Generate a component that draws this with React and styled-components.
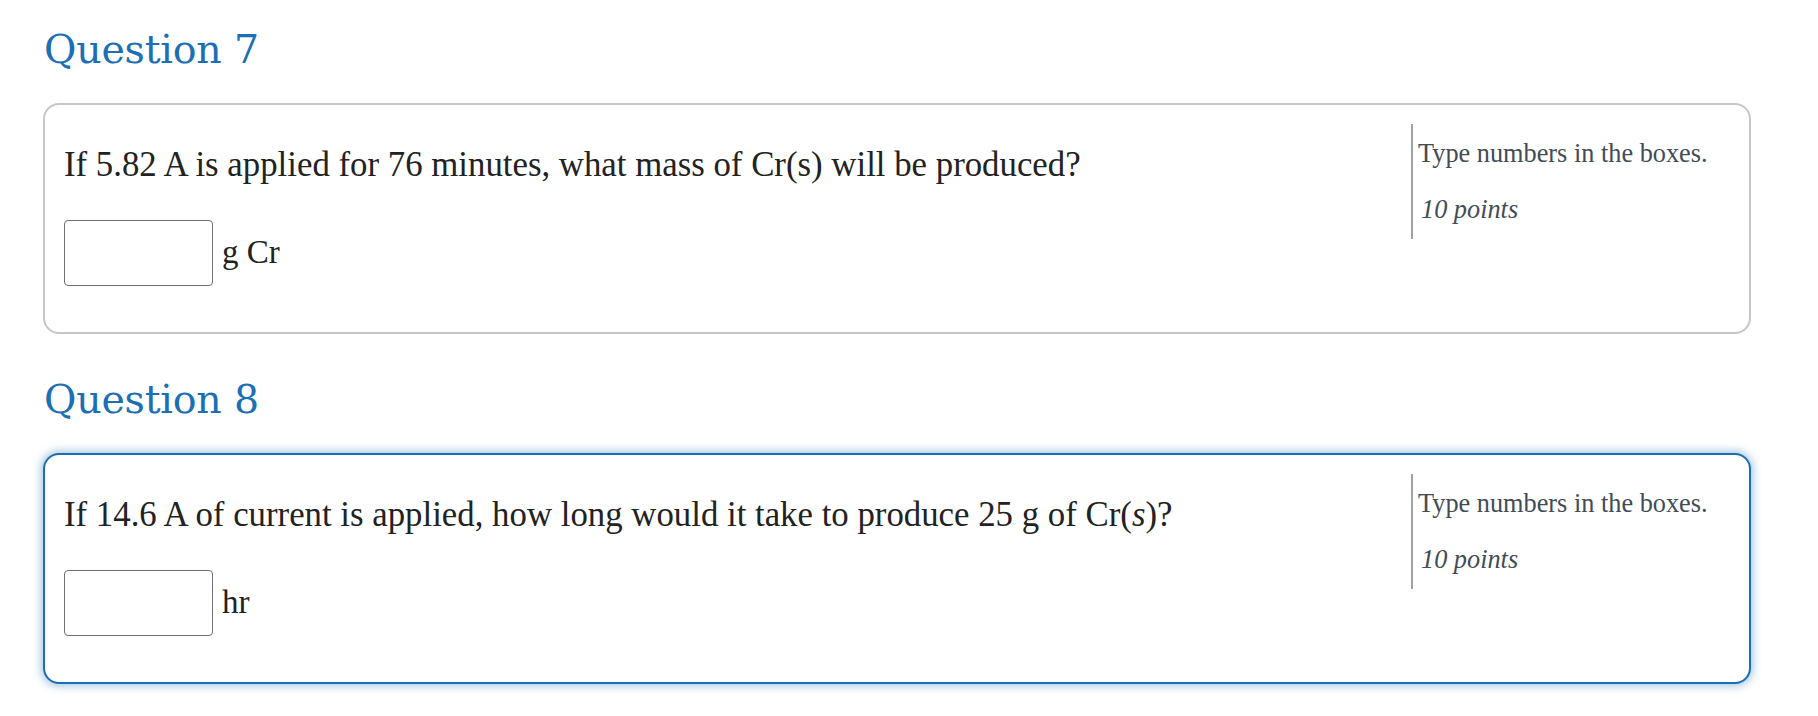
import React from "react";
import styled, { createGlobalStyle } from "styled-components";

const GlobalStyle = createGlobalStyle`
  html, body { margin: 0; padding: 0; background: #ffffff; }
  body { font-family: "Liberation Serif", "Times New Roman", serif; }
  * { box-sizing: border-box; }
`;

const Page = styled.main`
  padding: 25px 67px 20px 43px;
`;

const Section = styled.section`
  margin-bottom: 41px;
`;

const Heading = styled.h2`
  margin: 0 0 30px 1px;
  font-family: "DejaVu Serif", "Liberation Serif", serif;
  font-weight: 400;
  font-size: 39.5px;
  line-height: 48px;
  letter-spacing: -0.2px;
  color: #1c6fb5;
`;

const Card = styled.div`
  display: flex;
  align-items: flex-start;
  border-radius: 16px;
  border: 2px solid ${(p) => (p.$active ? "#1b6eb4" : "#c6c6c6")};
  box-shadow: ${(p) =>
    p.$active ? "0 0 8px 2px rgba(27, 110, 180, 0.4)" : "none"};
  padding: 19px 36px 20px 19px;
  background: #fff;
`;

const Main = styled.div`
  flex: 1;
  padding-top: 17px;
  padding-bottom: 26px;
`;

const Prompt = styled.p`
  margin: 0 0 31px 0;
  font-size: 34.8px;
  line-height: 48px;
  color: #222;
`;

const AnswerRow = styled.div`
  display: flex;
  align-items: center;
  gap: 9px;
`;

const NumberBox = styled.input`
  width: 149px;
  height: 66px;
  border: 1px solid #6f6f6f;
  border-radius: 4px;
  background: #fff;
  font: inherit;
  font-size: 30px;
  padding: 0 10px;
  outline: none;
`;

const Unit = styled.span`
  font-size: 33px;
  line-height: 48px;
  color: #222;
  position: relative;
  top: -1px;
`;

const Aside = styled.aside`
  width: 302px;
  border-left: 2px solid #9ea3a8;
  padding: 10px 0 10px 5px;
`;

const Instruction = styled.p`
  margin: 0;
  font-size: 26.3px;
  line-height: 39px;
  color: #424c56;
`;

const Points = styled.p`
  margin: 17px 0 0 3px;
  font-size: 26.3px;
  line-height: 39px;
  font-style: italic;
  color: #424c56;
`;

const questions = [
  {
    id: 7,
    text: "If 5.82 A is applied for 76 minutes, what mass of Cr(s) will be produced?",
    unit: "g Cr",
    active: false,
  },
  {
    id: 8,
    text: (
      <>
        If 14.6 A of current is applied, how long would it take to produce 25 g
        of Cr(<i>s</i>)?
      </>
    ),
    unit: "hr",
    active: true,
  },
];

export default function App() {
  return (
    <>
      <GlobalStyle />
      <Page>
        {questions.map((q) => (
          <Section key={q.id}>
            <Heading>Question {q.id}</Heading>
            <Card $active={q.active}>
              <Main>
                <Prompt>{q.text}</Prompt>
                <AnswerRow>
                  <NumberBox type="text" aria-label={`Answer ${q.id}`} />
                  <Unit>{q.unit}</Unit>
                </AnswerRow>
              </Main>
              <Aside>
                <Instruction>Type numbers in the boxes.</Instruction>
                <Points>10 points</Points>
              </Aside>
            </Card>
          </Section>
        ))}
      </Page>
    </>
  );
}
